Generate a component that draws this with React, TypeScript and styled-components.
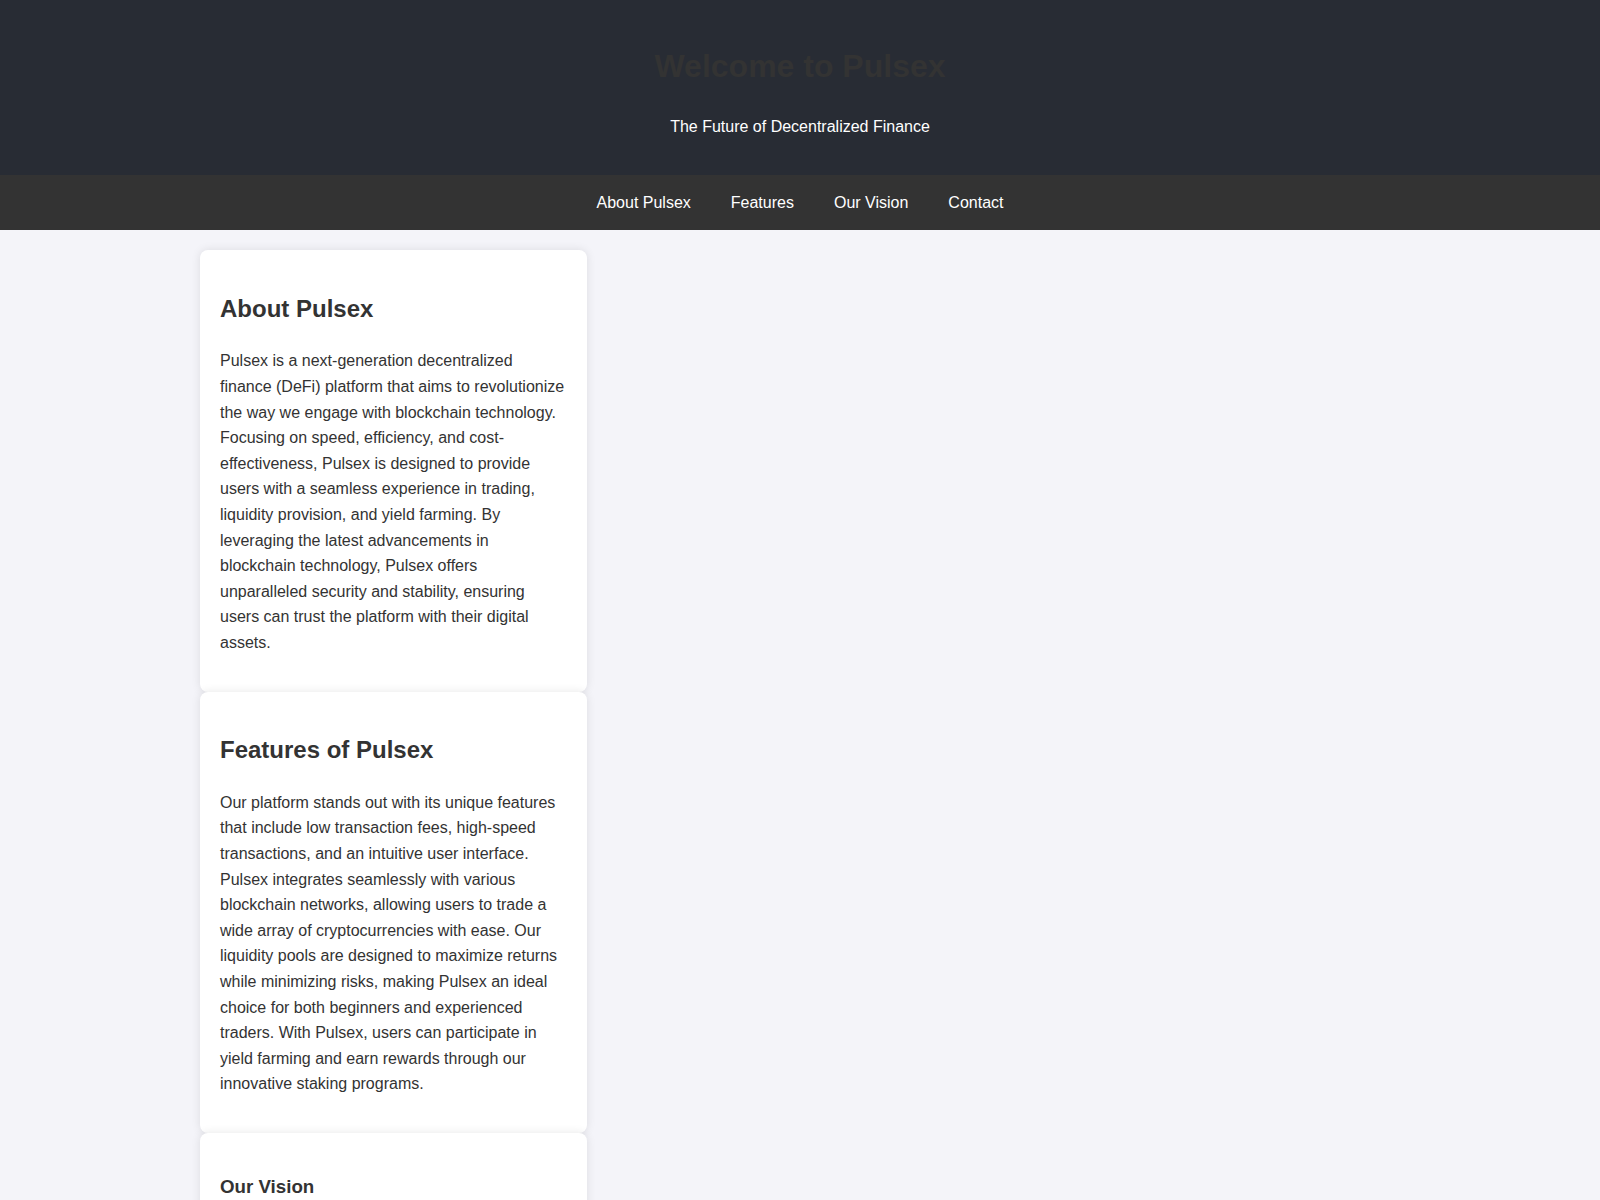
import { FC } from "react";
import styled, { createGlobalStyle } from "styled-components";

const GlobalStyle = createGlobalStyle`
  body {
    margin: 0;
    font-family: "Liberation Sans", Arial, sans-serif;
    line-height: 1.6;
    background-color: #f4f4f9;
    color: #333;
  }
`;

const Header = styled.header`
  background-color: #282c34;
  color: #ffffff;
  text-align: center;
  padding: 20px 0 19px;
`;

const Title = styled.h1`
  font-size: 32px;
  margin: 21.44px 0;
  color: #333;
`;

const Tagline = styled.p`
  margin: 16px 0;
  font-size: 16px;
`;

const Nav = styled.nav`
  background-color: #333;
  display: flex;
  justify-content: center;
  padding: 15px 0;
`;

const NavLink = styled.a`
  color: #ffffff;
  text-decoration: none;
  margin: 0 20px;
  font-size: 16px;
`;

const Main = styled.main`
  max-width: 1200px;
  margin: 0 auto;
  padding: 20px 0;
  display: grid;
  grid-template-columns: repeat(3, 1fr);
  column-gap: 20px;
`;

const Column = styled.div`
  display: flex;
  flex-direction: column;
`;

const Card = styled.section`
  background: #ffffff;
  border-radius: 8px;
  box-shadow: 0 0 10px rgba(0, 0, 0, 0.1);
  padding: 20px;
`;

const CardTitle = styled.h2<{ $small?: boolean }>`
  font-size: ${(p) => (p.$small ? "18.72px" : "24px")};
  margin: ${(p) => (p.$small ? "18.72px 0" : "19.92px 0")};
  color: #333;
`;

const Text = styled.p`
  margin: 16px 0;
  font-size: 16px;
`;

const sections = [
  {
    id: "about",
    title: "About Pulsex",
    body: "Pulsex is a next-generation decentralized finance (DeFi) platform that aims to revolutionize the way we engage with blockchain technology. Focusing on speed, efficiency, and cost-effectiveness, Pulsex is designed to provide users with a seamless experience in trading, liquidity provision, and yield farming. By leveraging the latest advancements in blockchain technology, Pulsex offers unparalleled security and stability, ensuring users can trust the platform with their digital assets.",
  },
  {
    id: "features",
    title: "Features of Pulsex",
    body: "Our platform stands out with its unique features that include low transaction fees, high-speed transactions, and an intuitive user interface. Pulsex integrates seamlessly with various blockchain networks, allowing users to trade a wide array of cryptocurrencies with ease. Our liquidity pools are designed to maximize returns while minimizing risks, making Pulsex an ideal choice for both beginners and experienced traders. With Pulsex, users can participate in yield farming and earn rewards through our innovative staking programs.",
  },
  {
    id: "vision",
    title: "Our Vision",
    small: true,
    body: "At Pulsex, our vision is to create an open, inclusive and transparent financial ecosystem that empowers individuals around the world to take control of their financial future.",
  },
];

const App: FC = () => {
  return (
    <>
      <GlobalStyle />
      <Header>
        <Title>Welcome to Pulsex</Title>
        <Tagline>The Future of Decentralized Finance</Tagline>
      </Header>
      <Nav>
        <NavLink href="#about">About Pulsex</NavLink>
        <NavLink href="#features">Features</NavLink>
        <NavLink href="#vision">Our Vision</NavLink>
        <NavLink href="#contact">Contact</NavLink>
      </Nav>
      <Main>
        <Column>
          {sections.map((s) => (
            <Card key={s.id} id={s.id}>
              <CardTitle $small={s.small}>{s.title}</CardTitle>
              <Text>{s.body}</Text>
            </Card>
          ))}
        </Column>
      </Main>
    </>
  );
};

export default App;
